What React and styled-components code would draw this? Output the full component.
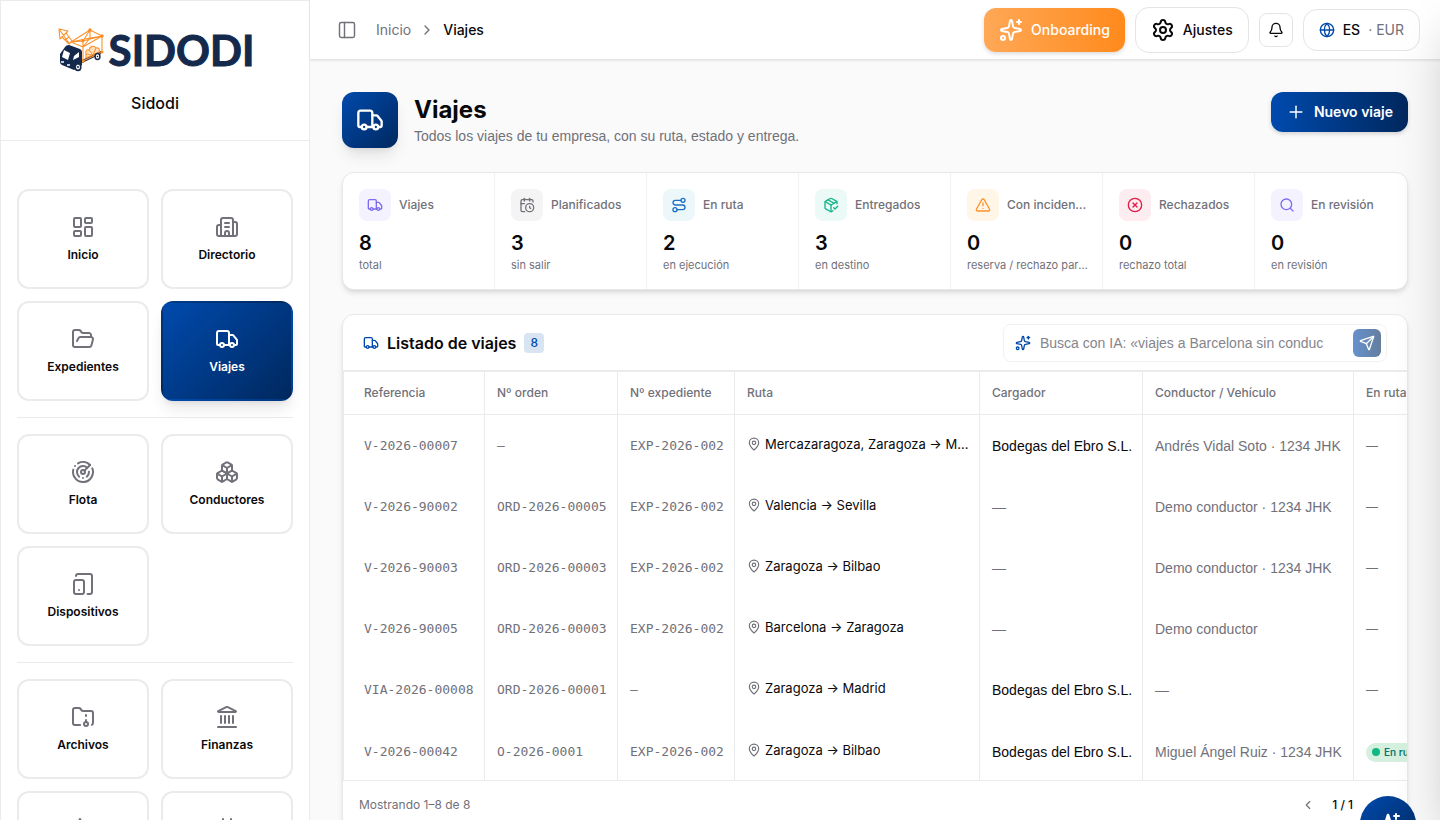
import React from "react";
import styled, { createGlobalStyle, css } from "styled-components";
import {
    Activity,
    Bell,
    Boxes,
    Building2,
    Calendar,
    CalendarClock,
    ChevronLeft,
    ChevronRight,
    CircleX,
    FolderArchive,
    FolderOpen,
    Globe,
    Landmark,
    LayoutDashboard,
    MapPin,
    PackageCheck,
    PanelLeft,
    Plus,
    Radar,
    Route,
    Search,
    Send,
    Settings,
    Sparkles,
    TabletSmartphone,
    TriangleAlert,
    Truck,
} from "lucide-react";

const blueGradient = "linear-gradient(135deg, #004aad 0%, #00285e 100%)";
const muted = "#71717a";
const line = "#ebebeb";
const uiFont = 'Inter, "Liberation Sans", sans-serif';
const textFont = '"Liberation Sans", Inter, sans-serif';

const GlobalStyle = createGlobalStyle`
  * { box-sizing: border-box; }
  html, body, #root { height: 100%; }
  body {
    margin: 0;
    overflow: hidden;
    background: #fafafa;
    color: #09090b;
    font-family: ${uiFont};
    font-size: 14px;
    line-height: 20px;
  }
  button, input { font: inherit; color: inherit; }
  button { cursor: pointer; }
  a { color: inherit; text-decoration: none; }
  svg { flex-shrink: 0; }
`;

const Shell = styled.div`
  display: flex;
  height: 100vh;
`;

const Sidebar = styled.aside`
  flex: 0 0 310px;
  overflow: hidden;
  background: #fff;
  border: 1px solid ${line};
  border-bottom: 0;
`;

const Brand = styled.div`
  display: flex;
  flex-direction: column;
  align-items: center;
  gap: 17px;
  height: 140px;
  padding-top: 23px;
  border-bottom: 1px solid ${line};
`;

const LogoRow = styled.div`
  display: flex;
  align-items: center;
  gap: 5px;
  height: 52px;
  padding-left: 2px;
`;

const Wordmark = styled.span`
  color: #14294b;
  font-family: Lato, sans-serif;
  font-size: 42px;
  font-weight: 700;
  line-height: 48px;
  -webkit-text-stroke: 1px #14294b;
`;

const BrandName = styled.div`
  font-size: 16px;
  font-weight: 500;
  line-height: 20px;
`;

const Nav = styled.nav`
  padding: 48px 16px 0;
`;

const TileGrid = styled.div`
  display: grid;
  grid-template-columns: 1fr 1fr;
  gap: 12px;

  & + & {
    margin-top: 16px;
    padding-top: 16px;
    border-top: 1px solid ${line};
  }
`;

const Tile = styled.a`
  display: flex;
  flex-direction: column;
  align-items: center;
  justify-content: center;
  gap: 8px;
  height: 100px;
  border: 2px solid ${line};
  border-radius: 12px;
  font-size: 12px;
  font-weight: 600;
  line-height: 16px;

  svg { color: ${muted}; }

  ${(p) => p.$active && css`
    border-color: transparent;
    background: ${blueGradient};
    color: #fff;
    box-shadow: 0 10px 15px -3px rgba(0, 0, 0, 0.1), 0 4px 6px -4px rgba(0, 0, 0, 0.1);
    svg { color: #fff; }
  `}
`;

const Main = styled.div`
  flex: 1;
  min-width: 0;
`;

const TopBar = styled.header`
  display: flex;
  align-items: center;
  justify-content: space-between;
  height: 60px;
  padding: 0 20px 0 27px;
  background: #fff;
  border-bottom: 1px solid #e4e4e7;
  box-shadow: 0 1px 2px rgba(0, 0, 0, 0.08);
`;

const Crumbs = styled.nav`
  display: flex;
  align-items: center;
  gap: 8px;
  color: ${muted};
`;

const IconButton = styled.button`
  display: inline-flex;
  align-items: center;
  justify-content: center;
  height: 28px;
  min-width: 20px;
  padding: 0;
  border: 0;
  background: none;
  color: ${muted};
`;

const PanelToggle = styled(IconButton)`
  margin-right: 11px;
`;

const PageButton = styled(IconButton)`
  width: 28px;
`;

const Current = styled.span`
  color: #09090b;
  font-weight: 500;
`;

const Actions = styled.div`
  display: flex;
  align-items: center;
  gap: 10px;
`;

const TopButton = styled.button`
  display: inline-flex;
  align-items: center;
  justify-content: center;
  gap: 8px;
  height: ${(p) => p.$height}px;
  padding: 0 15px;
  border: 1px solid #e4e4e7;
  border-radius: 14px;
  background: #fff;
  font-weight: 500;
`;

const OnboardingButton = styled(TopButton)`
  border: 0;
  border-radius: 12px;
  background: linear-gradient(90deg, #ffa857, #ff8a1c);
  color: #fff;
  box-shadow: 0 2px 4px rgba(0, 0, 0, 0.14);
`;

const BellButton = styled(TopButton)`
  width: 34px;
  padding: 0;
  border-radius: 8px;
`;

const Currency = styled.span`
  color: ${muted};
  font-weight: 400;
`;

const Content = styled.main`
  display: flex;
  flex-direction: column;
  gap: 24px;
  padding: 32px 32px 0;
`;

const PageHead = styled.div`
  display: flex;
  align-items: flex-start;
  gap: 16px;
`;

const PageIcon = styled.div`
  display: flex;
  align-items: center;
  justify-content: center;
  width: 56px;
  height: 56px;
  border-radius: 12px;
  background: ${blueGradient};
  color: #fff;
  box-shadow: 0 10px 15px -3px rgba(0, 0, 0, 0.1), 0 4px 6px -4px rgba(0, 0, 0, 0.1);
`;

const PageTitle = styled.div`
  flex: 1;
  padding-top: 2px;

  h1 {
    margin: 0;
    font-size: 24px;
    font-weight: 700;
    line-height: 32px;
  }
  p {
    margin: 0;
    color: ${muted};
    font-family: ${textFont};
  }
`;

const PrimaryButton = styled.button`
  display: inline-flex;
  align-items: center;
  gap: 8px;
  height: 40px;
  padding: 0 15px;
  border: 0;
  border-radius: 12px;
  background: linear-gradient(90deg, #004aad, #00285e);
  color: #fff;
  font-weight: 600;
  box-shadow: 0 2px 4px rgba(0, 0, 0, 0.16);
`;

const Card = styled.section`
  overflow: hidden;
  border: 1px solid #e8e8ea;
  border-radius: 12px;
  background: #fff;
  box-shadow: 0 4px 6px -1px rgba(0, 0, 0, 0.1), 0 2px 4px -2px rgba(0, 0, 0, 0.1);
`;

const Stats = styled(Card)`
  display: grid;
  grid-template-columns: repeat(7, minmax(0, 1fr));
`;

const Stat = styled.div`
  padding: 16px 10px 16px 16px;

  &:not(:last-child) { border-right: 1px solid #f1f1f2; }
`;

const StatHead = styled.div`
  display: flex;
  align-items: center;
  gap: 8px;
  color: ${muted};
  font-size: 12px;
  font-weight: 500;
  line-height: 16px;
`;

const StatIcon = styled.span`
  display: flex;
  flex-shrink: 0;
  align-items: center;
  justify-content: center;
  width: 32px;
  height: 32px;
  border-radius: 8px;
  background: ${(p) => p.$bg};
  color: ${(p) => p.$color};
`;

const Ellipsis = styled.span`
  display: block;
  overflow: hidden;
  text-overflow: ellipsis;
  white-space: nowrap;
`;

const StatValue = styled.div`
  margin-top: 8px;
  font-size: 20px;
  font-weight: 600;
  line-height: 28px;
`;

const StatHint = styled(Ellipsis)`
  color: ${muted};
  font-size: 11px;
  line-height: 16px;
`;

const ListHead = styled.div`
  display: flex;
  align-items: center;
  gap: 8px;
  height: 56px;
  padding: 0 20px;
  border-bottom: 1px solid ${line};
  color: #004aad;

  h2 {
    margin: 0;
    color: #09090b;
    font-size: 16px;
    font-weight: 600;
    line-height: 24px;
  }
`;

const Count = styled.span`
  padding: 0 6px;
  border-radius: 4px;
  background: #d9e4f3;
  font-size: 12px;
  font-weight: 500;
  line-height: 20px;
`;

const SearchBox = styled.form`
  display: flex;
  align-items: center;
  flex: 0 1 384px;
  gap: 8px;
  height: 38px;
  margin-left: auto;
  padding: 0 5px 0 11px;
  border: 1px solid #f1f1f2;
  border-radius: 8px;
`;

const SearchInput = styled.input`
  flex: 1;
  min-width: 0;
  margin-right: 22px;
  padding: 0 0 0 1px;
  border: 0;
  outline: 0;
  background: none;
  font-family: ${textFont};

  &::placeholder { color: #85858d; opacity: 1; }
`;

const SendButton = styled.button`
  display: flex;
  align-items: center;
  justify-content: center;
  width: 28px;
  height: 28px;
  padding: 0;
  border: 0;
  border-radius: 6px;
  background: linear-gradient(90deg, #004aad, #00285e);
  color: #fff;
  opacity: 0.6;
`;

const TableWrap = styled.div`
  overflow: hidden;
`;

const Table = styled.table`
  width: 1160px;
  table-layout: fixed;
  border-collapse: separate;
  border-spacing: 0;
  border-top: 1px solid ${line};
  border-left: 1px solid ${line};
  border-bottom: 1px solid ${line};

  th, td {
    padding: 0 12px;
    border-right: 1px solid ${line};
    text-align: left;
    white-space: nowrap;
  }
  th:first-child, td:first-child { padding-left: 20px; }
  th {
    height: 43px;
    border-bottom: 1px solid ${line};
    color: ${muted};
    font-size: 12px;
    font-weight: 500;
  }
  td {
    height: 61px;
    padding-top: 1px;
    font-family: ${textFont};
  }
  tbody tr:last-child td {
    height: 60px;
    padding-top: 3px;
  }
`;

const Code = styled.td`
  color: ${muted};

  && {
    font-family: "DejaVu Sans Mono", "Liberation Mono", monospace;
    font-size: 13px;
  }
`;

const RouteCell = styled.div`
  display: flex;
  align-items: center;
  gap: 4px;
  margin-right: -6px;
  padding-bottom: 4px;
  font-family: ${uiFont};
  font-size: 13px;

  svg { color: ${muted}; }
`;

const Muted = styled.td`
  color: ${muted};
`;

const Status = styled(Muted)`
  font-size: 12px;
`;

const Badge = styled.span`
  display: inline-flex;
  align-items: center;
  gap: 4px;
  padding: 0 8px 0 6px;
  border-radius: 10px;
  background: #d6f0e0;
  color: #0f766e;
  font-family: ${uiFont};
  font-size: 10px;
  font-weight: 600;
  line-height: 19px;
  vertical-align: middle;

  &::before {
    content: "";
    width: 8px;
    height: 8px;
    border-radius: 50%;
    background: #10b981;
  }
`;

const ListFoot = styled.div`
  display: flex;
  align-items: center;
  justify-content: space-between;
  height: 48px;
  padding: 0 16px;
  color: ${muted};
  font-size: 12px;
`;

const Pager = styled.div`
  display: flex;
  align-items: center;
  gap: 10px;
`;

const Assistant = styled.button`
  position: fixed;
  right: 24px;
  bottom: -32px;
  display: flex;
  align-items: center;
  justify-content: center;
  width: 56px;
  height: 56px;
  padding: 0;
  border: 0;
  border-radius: 50%;
  background: ${blueGradient};
  color: #fff;
`;

// closed drawer, only its shadow reaches the page
const Drawer = styled.div`
  position: fixed;
  top: 0;
  bottom: 0;
  left: 100%;
  width: 400px;
  box-shadow: 0 25px 50px -12px rgba(0, 0, 0, 0.25);
`;

const navGroups = [
    [
        { label: "Inicio", icon: LayoutDashboard },
        { label: "Directorio", icon: Building2 },
        { label: "Expedientes", icon: FolderOpen },
        { label: "Viajes", icon: Truck, active: true },
    ],
    [
        { label: "Flota", icon: Radar },
        { label: "Conductores", icon: Boxes },
        { label: "Dispositivos", icon: TabletSmartphone },
    ],
    [
        { label: "Archivos", icon: FolderArchive },
        { label: "Finanzas", icon: Landmark },
        { label: "Actividad", icon: Activity },
        { label: "Calendario", icon: Calendar },
    ],
];

const stats = [
    { label: "Viajes", value: 8, hint: "total", icon: Truck, color: "#7c6cf0", bg: "#f4f2ff" },
    { label: "Planificados", value: 3, hint: "sin salir", icon: CalendarClock, color: "#71717a", bg: "#f4f4f5" },
    { label: "En ruta", value: 2, hint: "en ejecución", icon: Route, color: "#1d6fc4", bg: "#ecf7fa" },
    { label: "Entregados", value: 3, hint: "en destino", icon: PackageCheck, color: "#14b58a", bg: "#ebf9f7" },
    { label: "Con incidencias", value: 0, hint: "reserva / rechazo parcial", icon: TriangleAlert, color: "#ff922b", bg: "#fff6e8" },
    { label: "Rechazados", value: 0, hint: "rechazo total", icon: CircleX, color: "#e11d48", bg: "#fdecf0" },
    { label: "En revisión", value: 0, hint: "en revisión", icon: Search, color: "#7c6cf0", bg: "#f4f2ff" },
];

const columns = [
    { label: "Referencia", width: 141 },
    { label: "Nº orden", width: 133 },
    { label: "Nº expediente", width: 117 },
    { label: "Ruta", width: 245 },
    { label: "Cargador", width: 163 },
    { label: "Conductor / Vehículo", width: 211 },
    { label: "En ruta", width: 150 },
];

const trips = [
    ["V-2026-00007", "—", "EXP-2026-002", "Mercazaragoza, Zaragoza → Madrid", "Bodegas del Ebro S.L.", "Andrés Vidal Soto · 1234 JHK"],
    ["V-2026-90002", "ORD-2026-00005", "EXP-2026-002", "Valencia → Sevilla", "", "Demo conductor · 1234 JHK"],
    ["V-2026-90003", "ORD-2026-00003", "EXP-2026-002", "Zaragoza → Bilbao", "", "Demo conductor · 1234 JHK"],
    ["V-2026-90005", "ORD-2026-00003", "EXP-2026-002", "Barcelona → Zaragoza", "", "Demo conductor"],
    ["VIA-2026-00008", "ORD-2026-00001", "—", "Zaragoza → Madrid", "Bodegas del Ebro S.L.", "—"],
    ["V-2026-00042", "O-2026-0001", "EXP-2026-002", "Zaragoza → Bilbao", "Bodegas del Ebro S.L.", "Miguel Ángel Ruiz · 1234 JHK", "En ruta"],
];

function LogoTruck() {
    return (
        <svg width="46" height="44" viewBox="0 0 46 44" fill="none">
            <path d="m24 35 19-9v-3l-19 9Z" fill="#14294b" />
            <g stroke="#f9932f" strokeWidth="1.1" strokeLinejoin="round">
                <path d="M13 14 32 2l12 6v16l-19 9V13L13 14l12 5L44 8M25 13 44 8M32 2v8l-7 9M32 2 25 13M32 10l12-2M13 14l19-4" />
                <path d="M28 26c-1-3 1-5 3-4 1-4 5-5 7-2 3-1 4 2 3 4l-13 6ZM31 22l4 5M38 20l-3 7M28 26l7 1 6-3" fill="#ffe0bd" />
                <path d="m1 1 9 2-2 2 6 8-3 3-7-7-2 2ZM1 1l10 14M4 9l4-4M7 12l4-3" />
            </g>
            <g fill="#ff8a1c">
                <circle cx="32" cy="2" r="1.7" />
                <circle cx="44" cy="8" r="1.7" />
                <circle cx="44" cy="24" r="1.5" />
                <circle cx="25" cy="33" r="1.7" />
                <circle cx="25" cy="13" r="1.4" />
            </g>
            <path d="M2 26 7 19q1-2 4-2l11 4q2 1 2 3v13l-8 5-12-5q-2-1-2-3Z" fill="#14294b" />
            <path d="m6 22 6 3-2 7-6-3ZM16 28l5-4v5l-6 3Z" fill="#fff" />
            <path d="M3 34h3M9 37h3" stroke="#fff" strokeWidth="1.6" />
            <ellipse cx="20" cy="39" rx="2.8" ry="3.4" fill="#fff" stroke="#14294b" strokeWidth="1.6" />
            <ellipse cx="39.5" cy="28.5" rx="2.4" ry="3" fill="#fff" stroke="#14294b" strokeWidth="1.5" />
            <circle cx="20" cy="39" r="1" fill="#14294b" />
            <circle cx="39.5" cy="28.5" r="0.8" fill="#14294b" />
        </svg>
    );
}

function AssistantIcon() {
    return (
        <svg width="28" height="28" viewBox="0 0 28 28" fill="none" stroke="currentColor" strokeWidth="2.6" strokeLinecap="round" strokeLinejoin="round">
            <path d="m9 21 5-16 5 16M10 16h7" />
            <path d="M22 4v5M20 6h5" strokeWidth="2" />
        </svg>
    );
}

function App() {
    return (
        <>
            <GlobalStyle />
            <Shell>
                <Sidebar>
                    <Brand>
                        <LogoRow>
                            <LogoTruck />
                            <Wordmark>SIDODI</Wordmark>
                        </LogoRow>
                        <BrandName>Sidodi</BrandName>
                    </Brand>
                    <Nav>
                        {navGroups.map((group, i) => (
                            <TileGrid key={i}>
                                {group.map(({ label, icon: Icon, active }) => (
                                    <Tile key={label} href="#" $active={active}>
                                        <Icon size={24} />
                                        {label}
                                    </Tile>
                                ))}
                            </TileGrid>
                        ))}
                    </Nav>
                </Sidebar>
                <Main>
                    <TopBar>
                        <Crumbs>
                            <PanelToggle aria-label="Menú"><PanelLeft size={20} strokeWidth={1.75} /></PanelToggle>
                            <a href="#">Inicio</a>
                            <ChevronRight size={16} />
                            <Current>Viajes</Current>
                        </Crumbs>
                        <Actions>
                            <OnboardingButton $height={44}><Sparkles size={24} />Onboarding</OnboardingButton>
                            <TopButton $height={46}><Settings size={24} />Ajustes</TopButton>
                            <BellButton $height={34} aria-label="Avisos"><Bell size={16} /></BellButton>
                            <TopButton $height={42}>
                                <Globe size={16} color="#004aad" />
                                ES
                                <Currency>· EUR</Currency>
                            </TopButton>
                        </Actions>
                    </TopBar>
                    <Content>
                        <PageHead>
                            <PageIcon><Truck size={28} /></PageIcon>
                            <PageTitle>
                                <h1>Viajes</h1>
                                <p>Todos los viajes de tu empresa, con su ruta, estado y entrega.</p>
                            </PageTitle>
                            <PrimaryButton><Plus size={20} strokeWidth={1.75} />Nuevo viaje</PrimaryButton>
                        </PageHead>
                        <Stats>
                            {stats.map(({ label, value, hint, icon: Icon, color, bg }) => (
                                <Stat key={label}>
                                    <StatHead>
                                        <StatIcon $bg={bg} $color={color}><Icon size={16} /></StatIcon>
                                        <Ellipsis>{label}</Ellipsis>
                                    </StatHead>
                                    <StatValue>{value}</StatValue>
                                    <StatHint>{hint}</StatHint>
                                </Stat>
                            ))}
                        </Stats>
                        <Card>
                            <ListHead>
                                <Truck size={16} />
                                <h2>Listado de viajes</h2>
                                <Count>8</Count>
                                <SearchBox>
                                    <Sparkles size={16} />
                                    <SearchInput aria-label="Busca con IA" placeholder="Busca con IA: «viajes a Barcelona sin conductor»" />
                                    <SendButton type="button" aria-label="Enviar"><Send size={16} /></SendButton>
                                </SearchBox>
                            </ListHead>
                            <TableWrap>
                                <Table>
                                    <colgroup>
                                        {columns.map((c) => <col key={c.label} width={c.width} />)}
                                    </colgroup>
                                    <thead>
                                        <tr>{columns.map((c) => <th key={c.label}>{c.label}</th>)}</tr>
                                    </thead>
                                    <tbody>
                                        {trips.map(([ref, order, file, route, shipper, driver, status]) => (
                                            <tr key={ref}>
                                                <Code>{ref}</Code>
                                                <Code>{order}</Code>
                                                <Code>{file}</Code>
                                                <td>
                                                    <RouteCell><MapPin size={14} /><Ellipsis>{route}</Ellipsis></RouteCell>
                                                </td>
                                                {shipper ? <td>{shipper}</td> : <Muted>—</Muted>}
                                                <Muted>{driver}</Muted>
                                                <Status>{status ? <Badge>{status}</Badge> : "—"}</Status>
                                            </tr>
                                        ))}
                                    </tbody>
                                </Table>
                            </TableWrap>
                            <ListFoot>
                                Mostrando 1–8 de 8
                                <Pager>
                                    <PageButton aria-label="Anterior"><ChevronLeft size={14} /></PageButton>
                                    <Current>1 / 1</Current>
                                    <PageButton aria-label="Siguiente"><ChevronRight size={14} /></PageButton>
                                </Pager>
                            </ListFoot>
                        </Card>
                    </Content>
                </Main>
            </Shell>
            <Drawer />
            <Assistant aria-label="Asistente"><AssistantIcon /></Assistant>
        </>
    );
}

export default App;
